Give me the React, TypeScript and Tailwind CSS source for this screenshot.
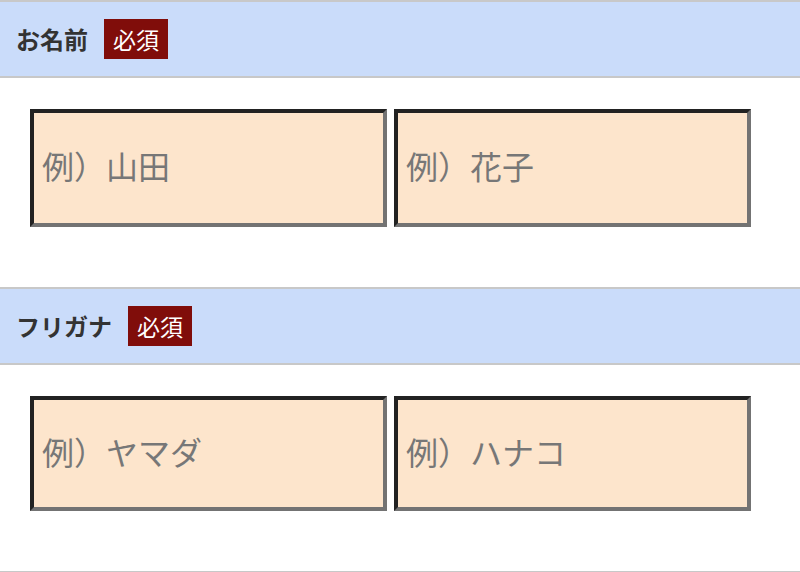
import React from 'react';

const font = { fontFamily: '"Noto Sans CJK JP", "Noto Sans", sans-serif' };

interface FieldProps {
    label: string;
    placeholders: [string, string];
    inputHeight: string;
}

const Field: React.FC<FieldProps> = ({ label, placeholders, inputHeight }) => {
    return (
        <section>
            <div className="flex h-[78px] items-center gap-4 border-y-2 border-[#c8c8c8] bg-[#cadcfa] pl-4">
                <span className="text-[24px] font-bold text-[#333]">{label}</span>
                <span className="flex h-10 items-center bg-[#800d0a] px-[9px] text-[23px] text-white">必須</span>
            </div>
            <div className="flex gap-[7px] pt-[31px] pb-[60px] pl-[30px]">
                {placeholders.map((p) => (
                    <input
                        key={p}
                        placeholder={p}
                        className={`w-[357px] ${inputHeight} border-4 border-t-[#222] border-l-[#222] border-r-[#737373] border-b-[#737373] bg-[#fde5cc] pl-[8px] pb-[6px] text-[32px] outline-none placeholder:text-[#777]`}
                        style={font}
                    />
                ))}
            </div>
        </section>
    );
};

export default function App() {
    return (
        <div className="min-h-[572px] w-[800px] bg-white" style={font}>
            <Field label="お名前" placeholders={['例）山田', '例）花子']} inputHeight="h-[118px]" />
            <Field label="フリガナ" placeholders={['例）ヤマダ', '例）ハナコ']} inputHeight="h-[115px]" />
            <div className="border-t-2 border-[#c8c8c8]" />
        </div>
    );
}
